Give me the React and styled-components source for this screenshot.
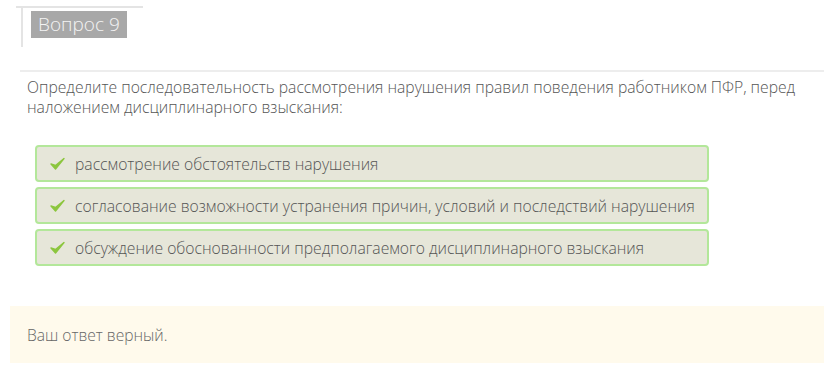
import React from 'react'
import styled, { createGlobalStyle } from 'styled-components'

const Global = createGlobalStyle`
  body {
    margin: 0;
    background: #fff;
    font-family: "Open Sans", "Liberation Sans", sans-serif;
  }
`

const Page = styled.div`
  width: 824px;
  height: 378px;
  overflow: hidden;
  background: #fff;
`

const Info = styled.div`
  margin: 6px 0 0 16px;
  width: 127px;
  border-top: 2px solid #e4e4e4;
`

const InfoInner = styled.div`
  margin-left: 5px;
  height: 39px;
  border-left: 2px solid #e4e4e4;
  padding: 3px 0 0 8px;
  box-sizing: border-box;
`

const Badge = styled.div`
  display: inline-block;
  width: 96px;
  height: 27px;
  line-height: 27px;
  box-sizing: border-box;
  padding-left: 7px;
  background: #a8a8a8;
  color: #f4f4f4;
  font-size: 19px;
  font-weight: 300;
`

const Divider = styled.div`
  margin: 23px 0 0 20px;
  border-top: 2px solid #ededed;
`

const Question = styled.p`
  margin: 5px 16px 0 27px;
  font-size: 15.7px;
  font-weight: 300;
  line-height: 20px;
  color: #555;
`

const Answers = styled.div`
  margin: 28px 0 0 35px;
  width: 674px;
  display: flex;
  flex-direction: column;
  gap: 5px;
`

const Answer = styled.div`
  height: 37px;
  box-sizing: border-box;
  display: flex;
  align-items: center;
  gap: 10px;
  padding-left: 13px;
  background: #e6e6d9;
  border: 2px solid #b3e79a;
  border-radius: 4px;
  color: #555;
  font-size: 15.7px;
  font-weight: 300;
`

const Feedback = styled.div`
  margin: 40px 0 0 10px;
  height: 57px;
  display: flex;
  align-items: center;
  padding-left: 17px;
  background: #fffaec;
  color: #666;
  font-size: 15.6px;
  font-weight: 300;
`

const Check = () => (
  <svg width="15" height="13" viewBox="0 0 15 13">
    <path d="M1 7 L5.5 12 L14 1.5 L5.5 8.5 Z" fill="#8cc63e" stroke="#8cc63e" strokeWidth="1.4" strokeLinejoin="round" />
  </svg>
)

const answers = [
  'рассмотрение обстоятельств нарушения',
  'согласование возможности устранения причин, условий и последствий нарушения',
  'обсуждение обоснованности предполагаемого дисциплинарного взыскания',
]

const App = () => (
  <Page>
    <Global />
    <Info>
      <InfoInner>
        <Badge>Вопрос 9</Badge>
      </InfoInner>
    </Info>
    <Divider />
    <Question>
      Определите последовательность рассмотрения нарушения правил поведения работником ПФР, перед наложением дисциплинарного взыскания:
    </Question>
    <Answers>
      {answers.map((a) => (
        <Answer key={a}>
          <Check />
          {a}
        </Answer>
      ))}
    </Answers>
    <Feedback>Ваш ответ верный.</Feedback>
  </Page>
)

export default App
